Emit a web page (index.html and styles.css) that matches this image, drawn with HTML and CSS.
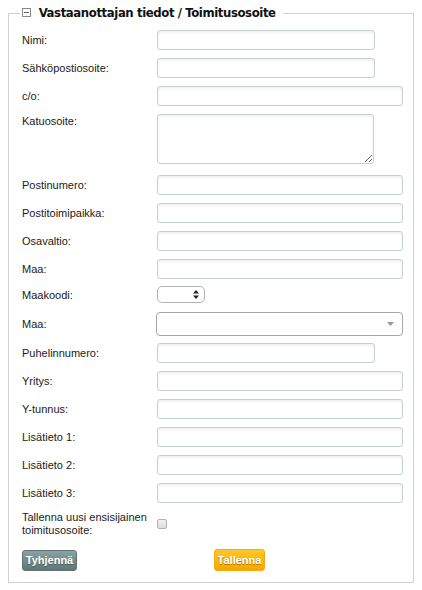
FILE: index.html
```html
<!DOCTYPE html>
<html lang="fi">
<head>
    <meta charset="UTF-8">
    <meta name="viewport" content="width=device-width, initial-scale=1.0">
    <title>Vastaanottajan tiedot</title>
    <link rel="stylesheet" href="styles.css">
</head>
<body>
    <form id="shippingForm">
        <fieldset class="box">
            <legend>
                <span class="toggle-icon">
                    <svg width="9" height="9" viewBox="0 0 9 9"><rect x="0.5" y="0.5" width="8" height="8" fill="#fff" stroke="#8a8a8a"/><line x1="2" y1="4.5" x2="7" y2="4.5" stroke="#666"/></svg>
                </span>
                Vastaanottajan tiedot / Toimitusosoite
            </legend>

            <div class="row">
                <label for="name">Nimi:</label>
                <input type="text" id="name" class="short">
            </div>
            <div class="row">
                <label for="email">Sähköpostiosoite:</label>
                <input type="text" id="email" class="short">
            </div>
            <div class="row">
                <label for="co">c/o:</label>
                <input type="text" id="co">
            </div>
            <div class="row row-top">
                <label for="street">Katuosoite:</label>
                <textarea id="street"></textarea>
            </div>
            <div class="row">
                <label for="zip">Postinumero:</label>
                <input type="text" id="zip">
            </div>
            <div class="row">
                <label for="city">Postitoimipaikka:</label>
                <input type="text" id="city">
            </div>
            <div class="row">
                <label for="state">Osavaltio:</label>
                <input type="text" id="state">
            </div>
            <div class="row">
                <label for="country">Maa:</label>
                <input type="text" id="country">
            </div>
            <div class="row row-code">
                <label for="countryCode">Maakoodi:</label>
                <div class="code-select">
                    <select id="countryCode"></select>
                    <svg class="updown" width="6" height="9" viewBox="0 0 6 9"><path d="M3 0 L6 3.5 L0 3.5 Z M0 5.5 L6 5.5 L3 9 Z" fill="#222"/></svg>
                </div>
            </div>
            <div class="row row-country">
                <label for="country2">Maa:</label>
                <div class="country-select">
                    <select id="country2"></select>
                    <svg class="arrow" width="7" height="4" viewBox="0 0 7 4"><path d="M0 0 L7 0 L3.5 4 Z" fill="#999"/></svg>
                </div>
            </div>
            <div class="row">
                <label for="phone">Puhelinnumero:</label>
                <input type="text" id="phone" class="short">
            </div>
            <div class="row">
                <label for="company">Yritys:</label>
                <input type="text" id="company">
            </div>
            <div class="row">
                <label for="businessId">Y-tunnus:</label>
                <input type="text" id="businessId">
            </div>
            <div class="row">
                <label for="extra1">Lisätieto 1:</label>
                <input type="text" id="extra1">
            </div>
            <div class="row">
                <label for="extra2">Lisätieto 2:</label>
                <input type="text" id="extra2">
            </div>
            <div class="row">
                <label for="extra3">Lisätieto 3:</label>
                <input type="text" id="extra3">
            </div>
            <div class="row row-check">
                <label for="primary">Tallenna uusi ensisijainen toimitusosoite:</label>
                <input type="checkbox" id="primary">
            </div>

            <div class="buttons">
                <div><button type="reset" class="btn btn-clear">Tyhjennä</button></div>
                <div class="save-cell"><button type="submit" class="btn btn-save">Tallenna</button></div>
            </div>
        </fieldset>
    </form>
</body>
</html>
```

FILE: styles.css
```css
body {
    font-family: "Liberation Sans", Arial, sans-serif;
    font-size: 11px;
    color: #1a1a1a;
    margin: 5px 8px 0 8px;
    background-color: white;
}
.box {
    margin: 0;
    padding: 9px 10px 11px 13px;
    border: 1px solid #d2d2d2;
    min-width: 0;
}
.box legend {
    margin-left: -2px;
    padding: 0 7px 0 2px;
    font-family: "DejaVu Sans Condensed", "DejaVu Sans", Verdana, sans-serif;
    font-stretch: condensed;
    font-weight: bold;
    font-size: 13px;
    letter-spacing: -0.4px;
    color: #111;
    line-height: 16px;
}
.toggle-icon {
    display: inline-block;
    width: 9px;
    height: 9px;
    margin-right: 4px;
    vertical-align: 0;
}
.toggle-icon svg {
    display: block;
}
.row {
    display: grid;
    grid-template-columns: 135px 1fr;
    align-items: center;
    margin-bottom: 8px;
}
.row label {
    line-height: 14px;
}
.row-top {
    align-items: start;
    margin-bottom: 11px;
}
input[type="text"],
textarea {
    box-sizing: border-box;
    width: 246px;
    height: 20px;
    padding: 2px 4px;
    border: 1px solid #c6d0cd;
    border-radius: 3px;
    background: white;
    box-shadow: inset 0 2px 3px rgba(0, 0, 0, 0.06);
    font-family: inherit;
    font-size: 12px;
    outline: none;
}
input.short {
    width: 218px;
}
textarea {
    display: block;
    height: 50px;
    width: 217px;
}
.row-code {
    margin-top: -1px;
    margin-bottom: 9px;
}
.code-select {
    position: relative;
    width: 48px;
    height: 17px;
}
.code-select select {
    -webkit-appearance: none;
    appearance: none;
    box-sizing: border-box;
    width: 48px;
    height: 17px;
    border: 1px solid #b4b4b4;
    border-radius: 5px;
    background: white;
}
.updown {
    position: absolute;
    right: 6px;
    top: 4px;
}
.row-country {
    margin-bottom: 7px;
}
.country-select {
    position: relative;
    width: 247px;
    height: 24px;
    margin-left: -1px;
}
.country-select select {
    -webkit-appearance: none;
    appearance: none;
    box-sizing: border-box;
    width: 247px;
    height: 24px;
    border: 1px solid #a5a5a5;
    border-radius: 4px;
    background: white;
}
.arrow {
    position: absolute;
    right: 9px;
    top: 10px;
}
.row-check {
    margin-top: 8px;
    margin-bottom: 12px;
}
.row-check label {
    line-height: 13px;
}
input[type="checkbox"] {
    -webkit-appearance: none;
    appearance: none;
    box-sizing: border-box;
    width: 10px;
    height: 10px;
    margin: 0;
    border: 1px solid #b2b2b2;
    border-radius: 2px;
    background: linear-gradient(#f2f2f2, #dcdcdc);
}
.buttons {
    display: grid;
    grid-template-columns: 135px 1fr;
    align-items: center;
}
.save-cell {
    padding-left: 57px;
}
.btn {
    font-family: "Liberation Sans", Arial, sans-serif;
    font-weight: bold;
    font-size: 11px;
    color: white;
    text-shadow: 0 1px 1px rgba(0, 0, 0, 0.35);
    height: 21px;
    border-radius: 3px;
    cursor: pointer;
}
.btn-clear {
    width: 55px;
    padding: 0;
    border: 1px solid #5f7474;
    background: linear-gradient(#8aa2a2, #5e7676);
}
.btn-save {
    width: 51px;
    height: 22px;
    padding: 0;
    border: 1px solid #f3ac12;
    background: linear-gradient(#ffc82a, #f7a600);
}
.btn-clear:hover {
    background: #5e7676;
}
.btn-save:hover {
    background: #f7a600;
}
```
